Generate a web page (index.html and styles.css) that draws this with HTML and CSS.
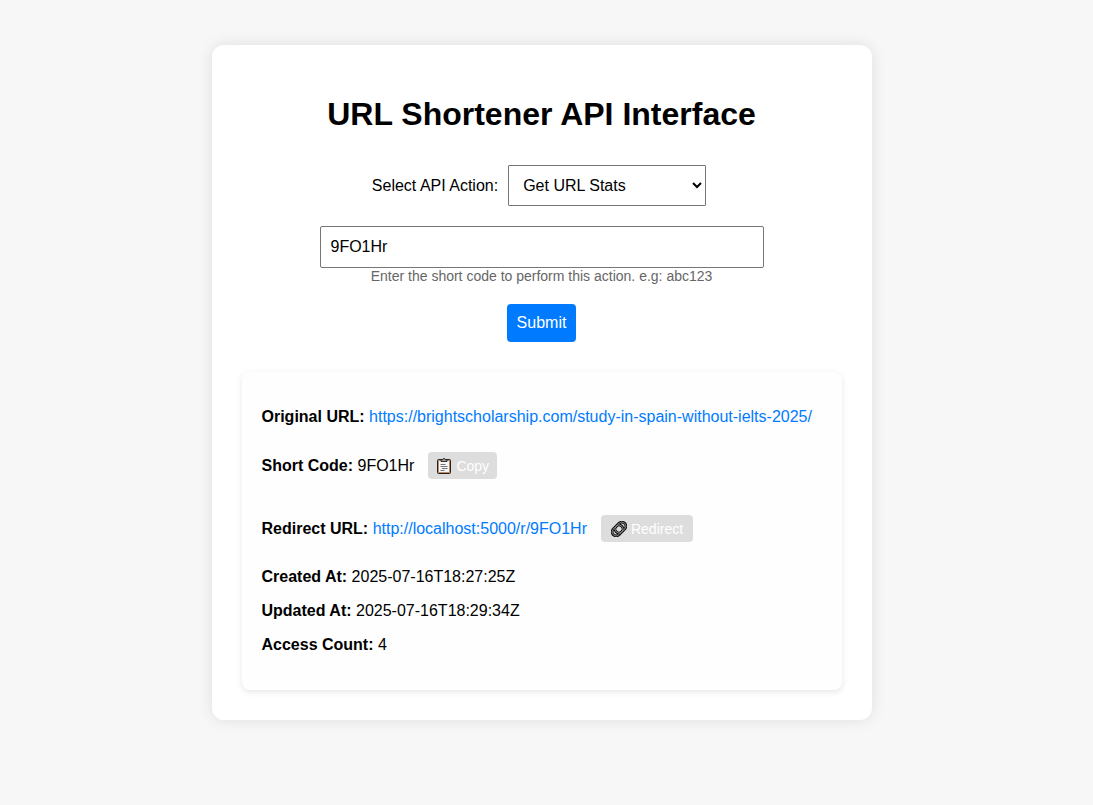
FILE: index.html
```
<!DOCTYPE html>
<html lang="en">
<head>
<meta charset="utf-8">
<meta name="viewport" content="width=device-width, initial-scale=1">
<title>URL Shortener API Interface</title>
<link rel="stylesheet" href="styles.css">
</head>
<body>
<main class="container">
  <h1 class="title">URL Shortener API Interface</h1>
  <form class="form">
    <div class="action-row">
      <label for="action">Select API Action:</label>
      <select id="action" class="action-select">
        <option>Create Short URL</option>
        <option selected>Get URL Stats</option>
        <option>Update Short URL</option>
        <option>Delete Short URL</option>
      </select>
    </div>
    <input id="code" class="code-input" type="text" value="9FO1Hr" aria-labelledby="hint">
    <label id="hint" class="hint" for="code">Enter the short code to perform this action. e.g: abc123</label>
    <button class="submit" type="button">Submit</button>
  </form>
  <section class="result">
    <p class="line"><strong>Original URL:</strong> <a href="#">https://brightscholarship.com/study-in-spain-without-ielts-2025/</a></p>
    <div class="line code-line">
      <span><strong>Short Code:</strong> 9FO1Hr</span>
      <button class="chip" type="button">
        <svg class="icon" viewBox="0 0 16 16" aria-hidden="true">
          <rect x="1.500" y="1.500" width="13" height="14" rx="1" fill="#c08a62" stroke="#222"/>
          <rect x="3" y="3" width="10" height="11" fill="#f3f5f6"/>
          <path d="M5 3.500V2H6.500Q6.700.5 8 .5T9.500 2H11V3.500Z" fill="#aaa" stroke="#333"/>
          <path d="M4.500 6.500h5M4.500 8.500h7M6 10.500h5.500M4.500 12.500h4" stroke="#777" fill="none"/>
        </svg>
        Copy
      </button>
    </div>
    <div class="line redirect-line">
      <span><strong>Redirect URL:</strong> <a href="#">http://localhost:5000/r/9FO1Hr</a></span>
      <button class="chip chip-wide" type="button">
        <svg class="icon" viewBox="0 0 16 16" aria-hidden="true">
          <g transform="rotate(-45 8 8)" fill="none">
            <rect x="0" y="4" width="12" height="8" rx="4" stroke="#111" stroke-width="2.800"/>
            <rect x="4" y="4" width="12" height="8" rx="4" stroke="#111" stroke-width="2.800"/>
            <rect x="0" y="4" width="12" height="8" rx="4" stroke="#999" stroke-width=".8"/>
            <rect x="4" y="4" width="12" height="8" rx="4" stroke="#999" stroke-width=".8"/>
          </g>
        </svg>
        Redirect
      </button>
    </div>
    <p class="line"><strong>Created At:</strong> 2025-07-16T18:27:25Z</p>
    <p class="line"><strong>Updated At:</strong> 2025-07-16T18:29:34Z</p>
    <p class="line"><strong>Access Count:</strong> 4</p>
  </section>
</main>
</body>
</html>
```
FILE: styles.css
```
* { box-sizing: border-box; }

body {
  margin: 0;
  padding: 45px 30px 45px 20px;
  background: #f7f7f7;
  color: #000;
  font: 16px/18px "Liberation Sans", Arial, sans-serif;
}

.container {
  max-width: 660px;
  margin: 0 auto;
  padding: 50px 30px 30px;
  background: #fff;
  border-radius: 12px;
  box-shadow: 0 0 15px rgba(0, 0, 0, 0.1);
}

.title {
  margin: 0 0 32px;
  font-size: 32px;
  line-height: 38px;
  text-align: center;
}

.form {
  display: flex;
  flex-direction: column;
  align-items: center;
}

.action-row {
  display: flex;
  align-items: center;
  gap: 10px;
  margin: 0 5px 20px 0;
}

.action-select {
  width: 198px;
  height: 41px;
  padding: 10px;
  border: 1px solid #767676;
  border-radius: 1px;
  background: #fff;
  color: #000;
  font: inherit;
}

.code-input {
  width: 74%;
  height: 42px;
  padding: 10px;
  border: 1px solid #767676;
  border-radius: 2px;
  font: inherit;
}

.hint {
  color: #666;
  font-size: 14px;
  line-height: 16px;
}

.submit {
  margin: 20px 0 30px;
  padding: 10px;
  border: 0;
  border-radius: 4px;
  background: #007bff;
  color: #fff;
  font: inherit;
}

.result {
  padding: 36px 20px;
  background: #fefefe;
  border-radius: 8px;
  box-shadow: 0 2px 6px rgba(0, 0, 0, 0.1);
}

.line { margin: 0 0 16px; }
.line a { color: #007bff; text-decoration: none; }

.code-line, .redirect-line {
  display: flex;
  align-items: center;
  gap: 14px;
}

.code-line { margin: 26px 0 36px; }
.redirect-line { margin: 0 0 26px; }
.line:last-child { margin-bottom: 0; }

.chip {
  display: flex;
  align-items: center;
  gap: 4px;
  height: 27px;
  padding: 0 8px;
  border: 0;
  border-radius: 4px;
  background: #ddd;
  color: #fff;
  font: inherit;
  font-size: 14px;
}

.chip-wide { padding: 0 10px; }

.icon { width: 16px; height: 16px; }
```
